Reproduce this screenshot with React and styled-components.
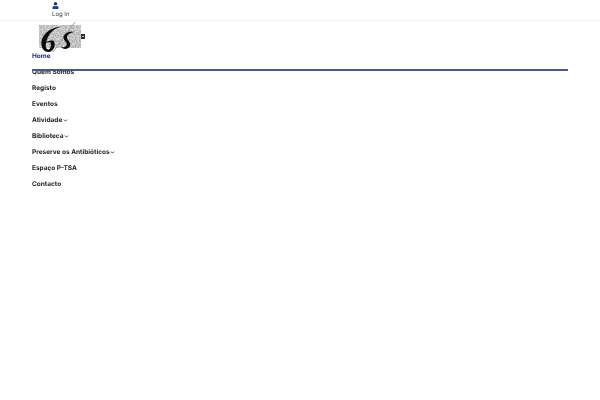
import React from 'react'
import styled, { createGlobalStyle } from 'styled-components'
import { FaUser } from 'react-icons/fa'
import { FiChevronDown } from 'react-icons/fi'

const GlobalStyle = createGlobalStyle`
  body {
    margin: 0;
    font-family: Inter, "Open Sans", sans-serif;
    text-rendering: geometricPrecision;
  }
`

const items = [
  { label: 'Home', active: true },
  { label: 'Quem Somos' },
  { label: 'Registo' },
  { label: 'Eventos' },
  { label: 'Atividade', sub: true },
  { label: 'Biblioteca', sub: true },
  { label: 'Preserve os Antibióticos', sub: true },
  { label: 'Espaço P-TSA' },
  { label: 'Contacto' },
]

const Logo = () => (
  <svg width="48" height="32" viewBox="0 0 48 32">
    <defs>
      <filter id="grain" x="0" y="0" width="100%" height="100%">
        <feTurbulence type="fractalNoise" baseFrequency="0.7" numOctaves="2" seed="4" />
        <feColorMatrix values="0 0 0 0 0.35  0 0 0 0 0.35  0 0 0 0 0.35  1.2 1.2 1.2 0 -1.4" />
      </filter>
    </defs>
    <rect x="1" y="4" width="42" height="23" fill="#dcdcdc" />
    <rect x="1" y="4" width="42" height="23" filter="url(#grain)" />
    <path d="M22 6 C14 6 7 11 4 18 C2 25 5 31 10.5 31 C15.5 31 18 25 16 20 C13 19 9 20 7 22 C9 21.5 11 21 12.5 21.5 C13.5 25 12.5 28 10.5 28.5 C8 29 7 25 8.5 20 C10.5 13 15 8 22 6 Z" fill="#0a0a0a" />
    <path d="M15 31 L37 1" fill="none" stroke="#9a9a9a" strokeWidth="1" />
    <path d="M36 11 C30 10 25 13 25.5 17 C26 20 29.5 21 28.5 24 C27.5 26.5 25 27 23 25.5 C24 28.5 30 29 32 25 C33.5 21.5 29.5 19.5 29 17 C28.5 14 32 12 36 11 Z" fill="#0a0a0a" />
    <rect x="43" y="13" width="4" height="5" fill="#2e2e2e" />
    <rect x="44" y="15" width="2" height="1" fill="#c4c4c4" />
  </svg>
)

const App = () => {
  return (
    <Page>
      <GlobalStyle />
      <TopBar>
        <LoginLink>
          <FaUser size={7} color="#1f3a7a" />
          <LoginText>Log In</LoginText>
        </LoginLink>
      </TopBar>
      <Main>
        <LogoWrap>
          <Logo />
        </LogoWrap>
        <Nav>
          <NavRule />
          {items.map((item) => (
            <NavItem key={item.label} active={item.active}>
              {item.label}
              {item.sub && <FiChevronDown size={5} strokeWidth={4} />}
            </NavItem>
          ))}
        </Nav>
      </Main>
    </Page>
  )
}

export default App

const Page = styled.div`
  will-change: transform;
`
const TopBar = styled.div`
  height: 21px;
  box-sizing: border-box;
  border-bottom: 1px solid #f2f2f2;
  padding: 2px 0 0 52px;
`
const LoginLink = styled.div`
  display: flex;
  flex-direction: column;
  align-items: flex-start;
  gap: 0.5px;
`
const LoginText = styled.span`
  font-size: 6px;
  line-height: 9px;
  color: #3a3f4a;
`
const Main = styled.div`
  padding: 0 32px;
`
const LogoWrap = styled.div`
  height: 27px;
  padding-left: 6px;
  display: flex;
`
const Nav = styled.nav`
  position: relative;
  display: flex;
  flex-direction: column;
`
const NavRule = styled.div`
  position: absolute;
  top: 21px;
  left: 0;
  right: 0;
  height: 2px;
  background: #4a5788;
`
const NavItem = styled.a`
  height: 16px;
  display: flex;
  align-items: center;
  gap: 0.5px;
  font-size: 6.5px;
  font-weight: 700;
  color: ${(props) => (props.active ? '#1f2f6b' : '#20232b')};
`
